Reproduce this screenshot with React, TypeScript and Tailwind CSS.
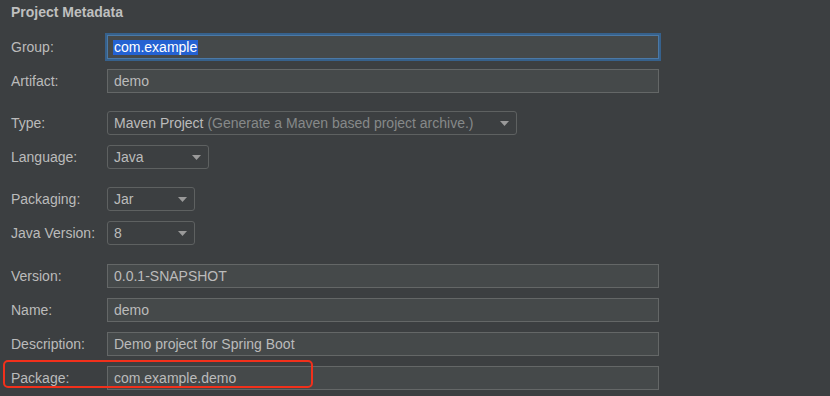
type Row = {
  label: string;
  kind: "text" | "select";
  value: string;
  hint?: string;
  width?: string;
  focused?: boolean;
  marked?: boolean;
  gap?: string;
};

const rows: Row[] = [
  { label: "Group:", kind: "text", value: "com.example", focused: true, gap: "mt-[15px]" },
  { label: "Artifact:", kind: "text", value: "demo", gap: "mt-[10px]" },
  {
    label: "Type:",
    kind: "select",
    value: "Maven Project",
    hint: "(Generate a Maven based project archive.)",
    width: "w-[410px]",
    gap: "mt-[18px]",
  },
  { label: "Language:", kind: "select", value: "Java", width: "w-[102px]", gap: "mt-[10px]" },
  { label: "Packaging:", kind: "select", value: "Jar", width: "w-[88px]", gap: "mt-[18px]" },
  { label: "Java Version:", kind: "select", value: "8", width: "w-[88px]", gap: "mt-[10px]" },
  { label: "Version:", kind: "text", value: "0.0.1-SNAPSHOT", gap: "mt-[19px]" },
  { label: "Name:", kind: "text", value: "demo", gap: "mt-[10px]" },
  { label: "Description:", kind: "text", value: "Demo project for Spring Boot", gap: "mt-[10px]" },
  { label: "Package:", kind: "text", value: "com.example.demo", marked: true, gap: "mt-[10px]" },
];

function Arrow() {
  return (
    <svg width="9" height="5" viewBox="0 0 9 5" className="shrink-0">
      <polygon points="0,0 9,0 4.5,5" fill="#9a9a9a" />
    </svg>
  );
}

function Field({ row }: { row: Row }) {
  if (row.kind === "select") {
    return (
      <div
        className={`${row.width} h-6 flex items-center justify-between pl-[6px] pr-[7px] border border-[#5e6161] rounded-[3px]`}
      >
        <span className="whitespace-nowrap">
          {row.value}
          {row.hint && <span className="text-[#868989]"> {row.hint}</span>}
        </span>
        <Arrow />
      </div>
    );
  }

  if (row.focused) {
    return (
      <div className="w-[552px] h-6 flex items-center pl-[5px] bg-[#45494a] border border-[#4b79a6] shadow-[0_0_0_2px_#36618c]">
        <span className="bg-[#2462d2] text-white leading-[15px] px-px">{row.value}</span>
      </div>
    );
  }

  return (
    <div className="w-[552px] h-6 flex items-center pl-[6px] bg-[#45494a] border border-[#646767]">
      {row.value}
    </div>
  );
}

export default function App() {
  return (
    <div
      className="w-[830px] h-[396px] overflow-hidden bg-[#3c3f41] text-[#bbbbbb] text-[14px] pl-[11px]"
      style={{ fontFamily: '"Liberation Sans", Arial, sans-serif' }}
    >
      <div className="pt-1 leading-4 font-bold text-[#bfbfbf]">Project Metadata</div>

      {rows.map((row) => (
        <div key={row.label} className={`relative flex items-center h-6 ${row.gap}`}>
          <div className="w-[96px] shrink-0 leading-4">{row.label}</div>
          <Field row={row} />

          {/* 강조 표시 박스 */}
          {row.marked && (
            <div className="absolute left-[-8px] top-[-6px] w-[310px] h-[28px] border-2 border-[#f2301b] rounded-[5px]" />
          )}
        </div>
      ))}
    </div>
  );
}
